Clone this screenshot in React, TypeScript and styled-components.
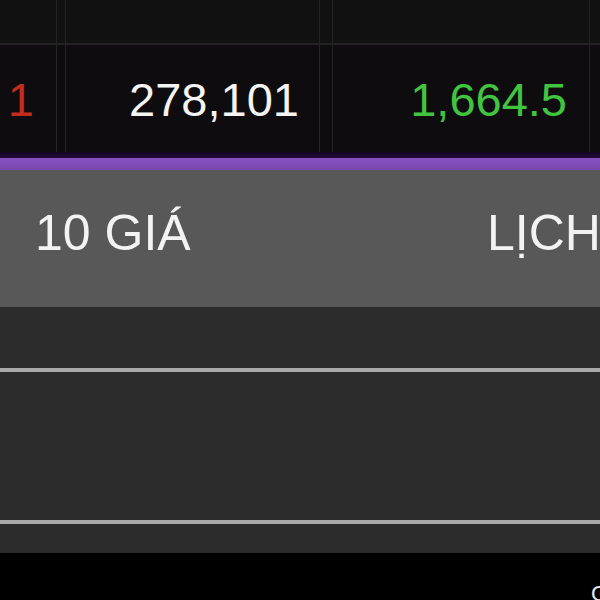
import styled, { createGlobalStyle } from 'styled-components';

const GlobalStyle = createGlobalStyle`
  html, body {
    margin: 0;
    padding: 0;
    background: #000;
  }
  body {
    font-family: 'Liberation Sans', Arial, sans-serif;
  }
`;

const Page = styled.div`
  width: 600px;
  height: 600px;
  overflow: hidden;
  display: flex;
  flex-direction: column;
  background: #000;
`;

const COLUMNS = '57px 9px 254px 13px 257px 1fr';

const HeaderRow = styled.div`
  display: grid;
  grid-template-columns: ${COLUMNS};
  height: 43px;
  background: #111111;
  border-bottom: 2px solid #232323;
`;

const DataRow = styled.div`
  display: grid;
  grid-template-columns: ${COLUMNS};
  height: 107px;
  background: #0e0c0e;
`;

const Cell = styled.div<{ $last?: boolean; $pad?: number }>`
  display: flex;
  align-items: center;
  justify-content: flex-end;
  padding-right: ${({ $pad }) => $pad ?? 21}px;
  border-right: ${({ $last }) => ($last ? 'none' : '1px solid #242424')};
  overflow: hidden;
`;

const Spacer = styled.div`
  border-right: 1px solid #242424;
`;

const Value = styled.span<{ $color: string }>`
  font-size: 47px;
  line-height: 47px;
  color: ${({ $color }) => $color};
  white-space: nowrap;
  margin-top: 1px;
`;

const AccentBar = styled.div`
  height: 18px;
  background: linear-gradient(
    to bottom,
    #12061f 0px,
    #24093f 6px,
    #8652bf 6px,
    #7a47b0 18px
  );
`;

const TabBar = styled.div`
  height: 137px;
  background: #585858;
  display: flex;
  align-items: flex-start;
  padding-top: 38px;
  box-sizing: border-box;
`;

const Tab = styled.div<{ $width: number; $indent?: number }>`
  width: ${({ $width }) => $width}px;
  padding-left: ${({ $indent }) => $indent ?? 0}px;
  box-sizing: border-box;
  flex-shrink: 0;
  font-size: 50px;
  line-height: 50px;
  color: #f3f3f3;
  white-space: nowrap;
`;

const Panel = styled.div`
  display: flex;
  flex-direction: column;
  background: #2c2c2c;
`;

const PanelRow = styled.div<{ $height: number; $divider?: boolean }>`
  height: ${({ $height }) => $height}px;
  border-bottom: ${({ $divider }) => ($divider ? '4px solid #a9a9a9' : 'none')};
`;

const Footer = styled.div`
  flex: 1;
  background: #000;
  display: flex;
  align-items: flex-end;
  justify-content: flex-end;
  overflow: hidden;
`;

const FooterMark = styled.span`
  font-size: 22px;
  line-height: 16px;
  color: #e8eef5;
  margin-right: -8px;
  margin-bottom: -2px;
`;

const App = () => {
  return (
    <>
      <GlobalStyle />
      <Page>
        <HeaderRow>
          <Cell />
          <Spacer />
          <Cell />
          <Spacer />
          <Cell />
          <Cell $last />
        </HeaderRow>
        <DataRow>
          <Cell $pad={22}>
            <Value $color="#c42a1d">1</Value>
          </Cell>
          <Spacer />
          <Cell $pad={20}>
            <Value $color="#f4f4f4">278,101</Value>
          </Cell>
          <Spacer />
          <Cell $pad={22}>
            <Value $color="#41c541">1,664.5</Value>
          </Cell>
          <Cell $last />
        </DataRow>
        <AccentBar />
        <TabBar>
          <Tab $width={487} $indent={35}>10 GIÁ</Tab>
          <Tab $width={300}>LỊCH SỬ</Tab>
        </TabBar>
        <Panel>
          <PanelRow $height={61} $divider />
          <PanelRow $height={148} $divider />
          <PanelRow $height={29} />
        </Panel>
        <Footer>
          <FooterMark>G</FooterMark>
        </Footer>
      </Page>
    </>
  );
};

export default App;
